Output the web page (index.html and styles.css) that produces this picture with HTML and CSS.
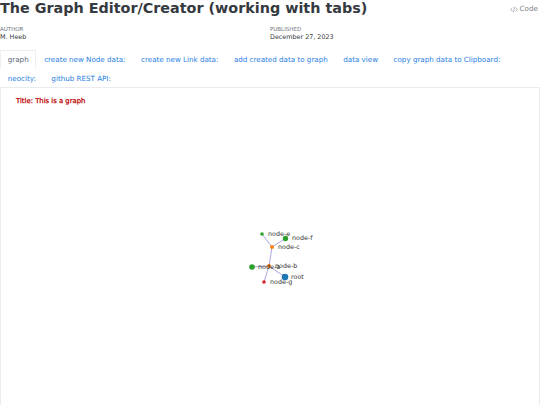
FILE: index.html
```html
<!DOCTYPE html>
<html lang="en">
<head>
<meta charset="utf-8">
<title>The Graph Editor/Creator (working with tabs)</title>
<link rel="stylesheet" href="styles.css">
</head>
<body>
<header class="head">
  <h1 class="title">The Graph Editor/Creator (working with tabs)</h1>
  <a class="code" href="#"><svg class="code-icon" viewBox="0 0 10 8"><path d="M3 1.500 0.800 4 3 6.500M7 1.500 9.200 4 7 6.500M6 0.500 4 7.500"/></svg>Code</a>
</header>
<div class="meta">
  <div><div class="label">AUTHOR</div><div class="value">M. Heeb</div></div>
  <div><div class="label">PUBLISHED</div><div class="value">December 27, 2023</div></div>
</div>
<nav class="tabs">
  <a class="tab active" href="#">graph</a>
  <a class="tab" href="#">create new Node data:</a>
  <a class="tab" href="#">create new Link data:</a>
  <a class="tab" href="#">add created data to graph</a>
  <a class="tab" href="#">data view</a>
  <a class="tab" href="#">copy graph data to Clipboard:</a>
  <a class="tab" href="#">neocity:</a>
  <a class="tab" href="#">github REST API:</a>
</nav>
<section class="panel">
  <svg class="graph" viewBox="1 88 538 317">
    <text class="graph-title" x="16" y="103">Title: This is a graph</text>
    <g class="links">
      <line x1="262" y1="234" x2="272" y2="247"/>
      <line x1="285.500" y1="238.500" x2="272" y2="247"/>
      <line x1="272" y1="247" x2="269" y2="266"/>
      <line x1="252" y1="267" x2="269" y2="266"/>
      <line x1="285" y1="277" x2="269" y2="266"/>
      <line x1="264" y1="282" x2="269" y2="266"/>
    </g>
    <circle class="green" cx="262" cy="234" r="1.800"/>
    <circle class="green" cx="285.500" cy="238.500" r="2.700"/>
    <circle class="orange" cx="272" cy="247" r="2"/>
    <circle class="orange" cx="269" cy="266" r="2"/>
    <circle class="green" cx="252" cy="267" r="2.800"/>
    <circle class="blue" cx="285" cy="277" r="3.300"/>
    <circle class="red" cx="264" cy="282" r="1.800"/>
    <text class="node" x="268" y="236">node-e</text>
    <text class="node" x="292" y="240">node-f</text>
    <text class="node" x="278" y="249">node-c</text>
    <text class="node" x="258" y="269">node-a</text>
    <text class="node" x="275" y="268">node-b</text>
    <text class="node" x="291" y="279">root</text>
    <text class="node" x="270" y="284">node-g</text>
  </svg>
</section>
</body>
</html>
```
FILE: styles.css
```css
html, body {
  margin: 0;
  padding: 0;
  height: 405px;
  overflow: hidden;
  background: #fff;
  font-family: "DejaVu Sans", sans-serif;
  color: #343a40;
}

.head {
  display: flex;
  justify-content: space-between;
  align-items: flex-start;
  height: 25px;
}

.title {
  margin: 0;
  font-size: 14.350px;
  line-height: 17px;
  font-weight: 700;
  white-space: nowrap;
}

.code {
  display: flex;
  align-items: center;
  gap: 2px;
  margin: 3px 2px 0 0;
  font-size: 7.200px;
  line-height: 12px;
  color: #7d8287;
  text-decoration: none;
}

.code-icon {
  width: 8px;
  height: 7px;
  fill: none;
  stroke: #7d8287;
  stroke-width: 0.700;
}

.meta {
  display: grid;
  grid-template-columns: 50% 50%;
  height: 25px;
}

.label {
  font-size: 5.500px;
  line-height: 7px;
  margin-top: 1px;
  color: #6c757d;
}

.value {
  font-size: 6.400px;
  line-height: 9px;
}

.tabs {
  display: flex;
  flex-wrap: wrap;
  align-content: flex-start;
  width: 520px;
  height: 38px;
  margin-bottom: -1px;
}

.tab {
  box-sizing: border-box;
  height: 19px;
  padding: 0 7.750px;
  font-size: 7.150px;
  line-height: 19px;
  color: #2780e3;
  text-decoration: none;
  white-space: nowrap;
}

.tab.active {
  color: #5a6570;
  border: 1px solid #eee;
  border-bottom-color: #fff;
  padding: 0 6.750px;
  line-height: 17px;
}

.panel {
  box-sizing: border-box;
  width: 540px;
  height: 318px;
  border: 1px solid #e9ecef;
  border-bottom: 0;
}

.graph {
  display: block;
  width: 538px;
  height: 317px;
}

.graph-title {
  font-size: 6.850px;
  fill: #c00000;
  stroke: #c00000;
  stroke-width: 0.250;
}

.links line {
  stroke: #8f8fd8;
  stroke-width: 0.800;
}

.node {
  font-size: 6.400px;
  fill: #333;
}

.green { fill: #2ca02c; }
.orange { fill: #ff7f0e; }
.blue { fill: #1f77b4; }
.red { fill: #d62728; }
```
